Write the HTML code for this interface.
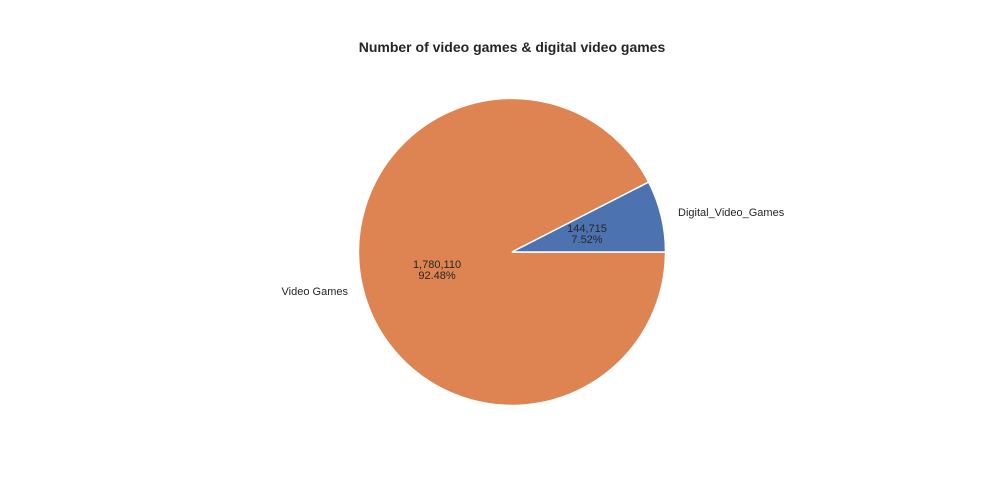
<!DOCTYPE html>
<html><head><meta charset="utf-8"><style>
html,body{margin:0;padding:0;background:#fff;}
svg{display:block;}
text{font-family:"Liberation Sans",Arial,sans-serif;fill:#262626;}
</style></head><body>
<svg width="1000" height="500" viewBox="0 0 1000 500">
<rect width="1000" height="500" fill="#fff"/>
<path d="M512,252 L665.5,252 A153.5,153.5 0 1,1 648.7,182.1 Z" fill="#dd8452" stroke="#fff" stroke-width="1.5"/>
<path d="M512,252 L648.7,182.1 A153.5,153.5 0 0,1 665.5,252 Z" fill="#4c72b0" stroke="#fff" stroke-width="1.5"/>
<text x="512" y="52" font-size="14" font-weight="bold" text-anchor="middle">Number of video games &amp; digital video games</text>
<text x="678" y="216" font-size="11">Digital_Video_Games</text>
<text x="348" y="295" font-size="11" text-anchor="end">Video Games</text>
<text x="587" y="232" font-size="11" text-anchor="middle">144,715</text>
<text x="587" y="243" font-size="11" text-anchor="middle">7.52%</text>
<text x="437" y="268" font-size="11" text-anchor="middle">1,780,110</text>
<text x="437" y="279" font-size="11" text-anchor="middle">92.48%</text>
</svg>
</body></html>
